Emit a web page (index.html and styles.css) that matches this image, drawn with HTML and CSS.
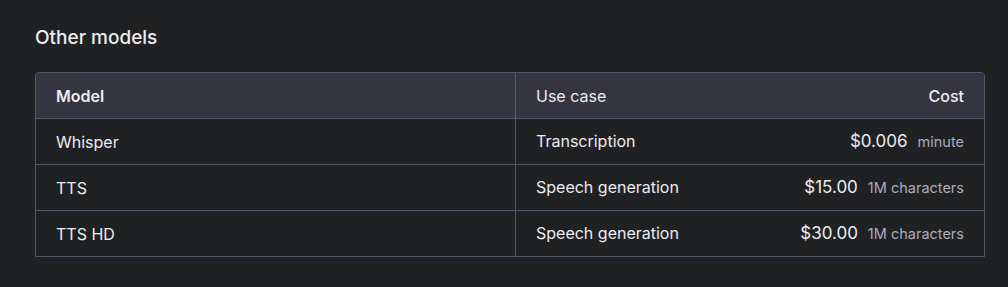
FILE: index.html
```html
<!DOCTYPE html>
<html>
<head>
<meta charset="utf-8">
<link rel="stylesheet" href="styles.css">
</head>
<body>
<section class="section">
  <h2 class="title">Other models</h2>
  <table class="pricing">
    <colgroup><col class="col-model"><col class="col-use"></colgroup>
    <thead>
      <tr>
        <th class="cell">Model</th>
        <th class="cell split"><span class="use-head">Use case</span><span class="cost-head">Cost</span></th>
      </tr>
    </thead>
    <tbody>
      <tr>
        <td class="cell">Whisper</td>
        <td class="cell split"><span>Transcription</span><span class="cost"><span class="price">$0.006</span><span class="unit">minute</span></span></td>
      </tr>
      <tr>
        <td class="cell">TTS</td>
        <td class="cell split"><span>Speech generation</span><span class="cost"><span class="price">$15.00</span><span class="unit">1M characters</span></span></td>
      </tr>
      <tr>
        <td class="cell">TTS HD</td>
        <td class="cell split"><span>Speech generation</span><span class="cost"><span class="price">$30.00</span><span class="unit">1M characters</span></span></td>
      </tr>
    </tbody>
  </table>
</section>
</body>
</html>
```
FILE: styles.css
```css
html, body {
  margin: 0;
  background: #202123;
}
body {
  font-family: Inter, "Liberation Sans", sans-serif;
  color: #ececf1;
}
.section {
  padding: 26px 23px 0 35px;
}
.title {
  margin: 0 0 22px 0;
  font-size: 19px;
  font-weight: 500;
  line-height: 24px;
  color: #ececf1;
}
.pricing {
  width: 950px;
  border-collapse: separate;
  border-spacing: 0;
  border: 1px solid #565869;
  border-top-right-radius: 4px;
  border-top-left-radius: 4px;
}
.col-model { width: 480px; }
.cell {
  height: 46px;
  padding: 0 20px;
  font-size: 16px;
  line-height: 20px;
  text-align: left;
  box-sizing: border-box;
  vertical-align: middle;
  border-top: 1px solid #565869;
}
tbody tr .cell:first-child,
thead tr .cell:first-child {
  border-right: 1px solid #565869;
}
thead .cell {
  border-top: none;
  height: 45px;
  background: #343541;
}
thead .cell:first-child { border-top-left-radius: 3px; font-weight: 600; }
thead .cell:last-child { border-top-right-radius: 3px; font-weight: 400; }
.split > span {
  display: inline-block;
}
.split {
  white-space: nowrap;
}
.split .cost, .split .cost-head {
  float: right;
}
.cost-head { font-weight: 500; }
.price {
  font-size: 17px;
  color: #ececf1;
}
.unit {
  font-size: 14.5px;
  color: #acacbe;
  margin-left: 10px;
}
```
